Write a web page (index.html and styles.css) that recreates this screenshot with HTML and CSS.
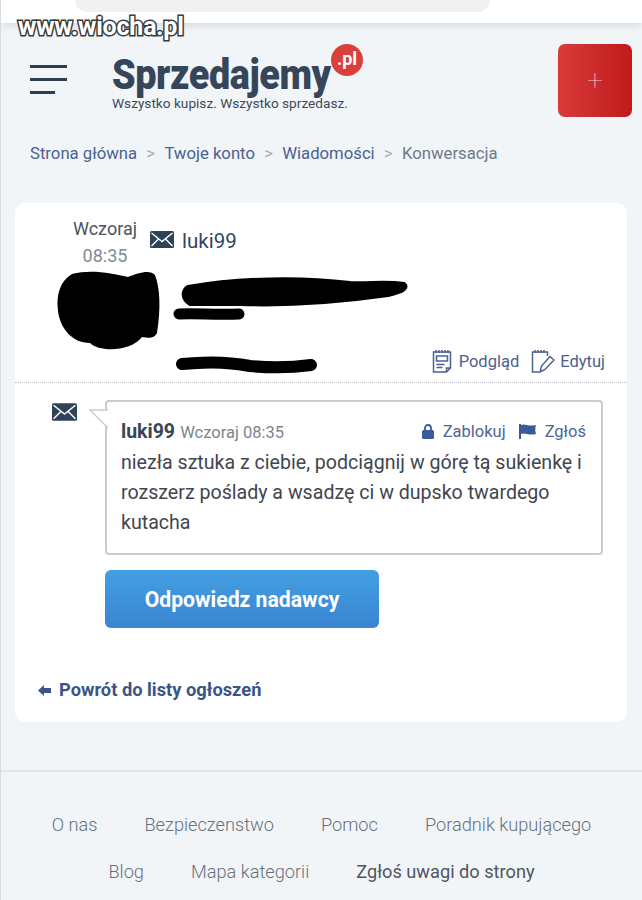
FILE: index.html
```html
<!DOCTYPE html>
<html lang="pl">

<head>
    <meta charset="UTF-8">
    <meta name="viewport" content="width=device-width, initial-scale=1.0">
    <title>Konwersacja</title>
    <link rel="stylesheet" href="styles.css">
</head>

<body>
    <div class="browser-bar">
        <div class="browser-pill"></div>
    </div>
    <div class="watermark">www.wiocha.pl</div>

    <header class="site-header">
        <div class="burger">
            <span></span>
            <span></span>
            <span class="short"></span>
        </div>
        <div class="logo">
            <div class="logo-name">Sprzedajemy</div>
            <div class="logo-badge">.pl</div>
            <div class="logo-tagline">Wszystko kupisz. Wszystko sprzedasz.</div>
        </div>
        <button class="add-btn">+</button>
    </header>

    <nav class="breadcrumb">
        <a>Strona główna</a>
        <span class="sep">&gt;</span>
        <a>Twoje konto</a>
        <span class="sep">&gt;</span>
        <a>Wiadomości</a>
        <span class="sep">&gt;</span>
        <span class="current">Konwersacja</span>
    </nav>

    <main class="card">
        <section class="offer">
            <div class="offer-top">
                <div class="offer-date">
                    <div class="day">Wczoraj</div>
                    <div class="hour">08:35</div>
                </div>
                <svg class="mail-icon" viewBox="0 0 24 17">
                    <rect width="24" height="17" rx="1.500" fill="#2f4358" />
                    <path d="M1.500 2 12 10.500 22.500 2M1.500 15 8.500 8M22.500 15 15.500 8" fill="none" stroke="#fff" stroke-width="1.400" />
                </svg>
                <span class="offer-user">luki99</span>
            </div>
            <div class="offer-actions">
                <a class="action">
                    <svg class="action-icon" viewBox="0 0 20 24">
                        <path d="M1.500 3h17v16l-4 4h-13zM14.500 23v-4h4M4 1v3M7 1v3M10 1v3M13 1v3M16 1v3M4.500 15.500h8M4.500 18.500h6" fill="none" stroke="#4a6290" stroke-width="1.500" />
                        <rect x="4.500" y="7" width="11" height="5" fill="none" stroke="#4a6290" stroke-width="1.500" />
                    </svg>
                    Podgląd
                </a>
                <a class="action">
                    <svg class="action-icon wide" viewBox="0 0 24 24">
                        <path d="M8 23H1.500V3h15v4M4 1v3M7 1v3M10 1v3M13 1v3M9 23l1.500-6L19 7.500l4 3.500-9 9.500z" fill="none" stroke="#4a6290" stroke-width="1.500" />
                    </svg>
                    Edytuj
                </a>
            </div>
            <!-- scribbles over the censored photo and title, page x with card-relative y -->
            <svg class="scribbles" viewBox="0 0 642 180">
                <path d="M72 71 C90 66 112 70 128 74 C138 70 150 66 155 72 C160 85 161 105 157 130 C154 136 148 135 142 134 C132 148 100 150 90 140 C72 140 60 125 58 108 C56 92 60 78 72 71Z" fill="#000" />
                <path d="M188 84 C240 75 300 74 350 80 C370 81 385 78 404 81 C408 85 404 88 388 92 C360 96 300 103 240 101 L190 101 C182 96 182 88 188 84Z" fill="#000" stroke="#000" stroke-width="4" stroke-linejoin="round" />
                <path d="M179 111 C195 110 215 112 239 111" fill="none" stroke="#000" stroke-width="11" stroke-linecap="round" />
                <path d="M182 161 C210 158 235 160 250 163 C270 165 290 165 311 162" fill="none" stroke="#000" stroke-width="12" stroke-linecap="round" />
            </svg>
        </section>

        <section class="thread">
            <div class="message-row">
                <svg class="mail-icon small" viewBox="0 0 24 17">
                    <rect width="24" height="17" rx="1.500" fill="#2f4358" />
                    <path d="M1.500 2 12 10.500 22.500 2M1.500 15 8.500 8M22.500 15 15.500 8" fill="none" stroke="#fff" stroke-width="1.400" />
                </svg>
                <div class="bubble">
                    <svg class="bubble-tail" viewBox="0 0 19 20">
                        <path d="M19 1H1L19 19" fill="#fff" stroke="#c8cdd0" stroke-width="1.500" />
                    </svg>
                    <div class="bubble-head">
                        <div class="author"><b>luki99</b> <span>Wczoraj 08:35</span></div>
                        <div class="bubble-actions">
                            <a class="action">
                                <svg class="mini-icon" viewBox="0 0 12 15">
                                    <path d="M3 6V4a3 3 0 0 1 6 0v2" fill="none" stroke="#3b5a9a" stroke-width="1.800" />
                                    <rect y="6" width="12" height="9" rx="1.500" fill="#3b5a9a" />
                                </svg>
                                Zablokuj
                            </a>
                            <a class="action">
                                <svg class="mini-icon flag" viewBox="0 0 18 15">
                                    <path d="M1 0v15" stroke="#3b5a9a" stroke-width="2" />
                                    <path d="M2 1c4-2 7 2 15 0-1 3-1 6 0 9-8 2-11-2-15 0z" fill="#3b5a9a" />
                                </svg>
                                Zgłoś
                            </a>
                        </div>
                    </div>
                    <p class="message-text">niezła sztuka z ciebie, podciągnij w górę tą sukienkę i rozszerz poślady a wsadzę ci w dupsko twardego kutacha</p>
                </div>
            </div>
            <button class="reply-btn">Odpowiedz nadawcy</button>
            <a class="back-link">
                <svg class="back-icon" viewBox="0 0 13 11">
                    <path d="M0 5.500 6 0v3h7v5H6v3z" fill="#3b5487" />
                </svg>
                Powrót do listy ogłoszeń
            </a>
        </section>
    </main>

    <footer class="site-footer">
        <div class="footer-links">
            <a>O nas</a>
            <a>Bezpieczenstwo</a>
            <a>Pomoc</a>
            <a>Poradnik kupującego</a>
        </div>
        <div class="footer-links">
            <a>Blog</a>
            <a>Mapa kategorii</a>
            <a class="strong">Zgłoś uwagi do strony</a>
        </div>
    </footer>
</body>

</html>
```

FILE: styles.css
```css
body {
    margin: 0;
    height: 900px;
    overflow: hidden;
    font-family: Roboto, "Liberation Sans", sans-serif;
    background-color: #f2f5f7;
    border-left: 1px solid #d9dde0;
    box-sizing: border-box;
    position: relative;
}

.browser-bar {
    height: 23px;
    background-color: #fff;
    box-shadow: 0 2px 8px rgba(0, 0, 0, 0.12);
    padding-left: 74px;
}

.browser-pill {
    width: 415px;
    height: 12px;
    background-color: #f0f1f2;
    border-radius: 0 0 14px 14px;
}

.watermark {
    position: absolute;
    top: 12px;
    left: 17px;
    font-size: 25px;
    font-weight: 700;
    color: #fff;
    letter-spacing: -0.2px;
    -webkit-text-stroke: 3px #3a3a3a;
    paint-order: stroke;
}

/* Header */
.site-header {
    display: flex;
    align-items: flex-start;
    padding: 21px 10px 0 29px;
    height: 120px;
    box-sizing: border-box;
}

.burger {
    width: 37px;
    margin-top: 21px;
    display: flex;
    flex-direction: column;
    gap: 10px;
}

.burger span {
    display: block;
    height: 3px;
    background-color: #2f3d4f;
}

.burger .short {
    width: 25px;
}

.logo {
    position: relative;
    margin-left: 45px;
    margin-top: 9px;
    flex: 1;
}

.logo-name {
    font-size: 43px;
    line-height: 42px;
    font-weight: 900;
    color: #36465a;
    letter-spacing: -0.5px;
    transform: scaleX(0.88);
    transform-origin: left center;
}

.logo-badge {
    position: absolute;
    left: 219px;
    top: -9px;
    width: 32px;
    height: 32px;
    border-radius: 50%;
    background-color: #d9403a;
    color: #fff;
    font-size: 18px;
    font-weight: 700;
    line-height: 30px;
    text-align: center;
}

.logo-tagline {
    font-size: 13.65px;
    color: #3d4a5a;
    line-height: 16px;
}

.add-btn {
    width: 74px;
    height: 73px;
    border: none;
    border-radius: 7px;
    background: linear-gradient(90deg, #d93a3a, #bf1b1b);
    color: #f6c9c9;
    font-size: 28px;
    font-weight: 100;
    font-family: Roboto, sans-serif;
}

/* Breadcrumb */
.breadcrumb {
    display: flex;
    gap: 9.3px;
    padding-left: 29px;
    font-size: 16.7px;
    line-height: 22px;
    height: 60px;
    color: #4a6290;
}

.breadcrumb .sep {
    color: #a5adb5;
}

.breadcrumb .current {
    color: #6d7a8c;
}

/* Card */
.card {
    margin: 0 15px 0 14px;
    height: 519px;
    background-color: #fff;
    border-radius: 10px;
}

.offer {
    position: relative;
    height: 180px;
    border-bottom: 1px dotted #b9bec2;
    box-sizing: border-box;
}

.offer-top {
    display: flex;
    align-items: flex-start;
    padding: 12px 0 0 58px;
}

.offer-date {
    width: 64px;
    text-align: center;
    font-size: 18px;
    line-height: 27px;
    color: #4a5460;
}

.hour {
    color: #7f8b96;
}

.mail-icon {
    width: 24px;
    height: 17px;
    margin: 16px 0 0 13px;
}

.offer-user {
    font-size: 20.5px;
    line-height: 26px;
    margin: 13px 0 0 8px;
    color: #33475c;
}

.offer-actions {
    position: absolute;
    right: 22px;
    bottom: 9px;
    display: flex;
    gap: 12px;
}

.action {
    display: flex;
    align-items: center;
    gap: 7px;
    color: #4a6290;
    font-size: 16.5px;
}

.action-icon {
    width: 20px;
    height: 24px;
}

.action-icon.wide {
    width: 24px;
    margin-right: -2px;
}

.scribbles {
    position: absolute;
    left: -15px;
    top: 0;
    width: 642px;
    height: 180px;
    pointer-events: none;
}

/* Thread */
.thread {
    padding: 17px 24px 0 23px;
}

.message-row {
    display: flex;
    align-items: flex-start;
}

.mail-icon.small {
    width: 25px;
    height: 18px;
    margin: 3px 0 0 14px;
    flex-shrink: 0;
}

.bubble {
    position: relative;
    margin-left: 28px;
    flex: 1;
    height: 155px;
    box-sizing: border-box;
    border: 2px solid #c8cdd0;
    border-radius: 4px;
    padding: 17px 15px 0 14px;
}

.bubble-tail {
    position: absolute;
    left: -18px;
    top: 7px;
    width: 19px;
    height: 20px;
}

.bubble-head {
    display: flex;
    justify-content: space-between;
    align-items: center;
    height: 24px;
}

.author {
    font-size: 16.5px;
    color: #7a8590;
}

.author b {
    font-size: 19.5px;
    color: #3a4654;
}

.author span {
    margin-left: 1px;
}

.bubble-actions {
    display: flex;
    gap: 13px;
}

.bubble-actions .action {
    color: #4f6696;
}

.mini-icon {
    width: 12px;
    height: 15px;
    margin-right: 2px;
}

.mini-icon.flag {
    width: 18px;
    margin-right: 1px;
}

.message-text {
    margin: 5px 0 0;
    font-size: 19.6px;
    line-height: 30px;
    color: #3f4650;
}

.reply-btn {
    display: block;
    width: 274px;
    height: 58px;
    margin: 15px 0 0 67px;
    border: none;
    border-radius: 6px;
    background: linear-gradient(180deg, #439fe2, #3a84d1);
    color: #fff;
    font-family: Roboto, sans-serif;
    font-size: 21.2px;
    font-weight: 700;
}

.back-link {
    display: flex;
    align-items: center;
    gap: 8px;
    margin-top: 51px;
    color: #3b5487;
    font-size: 18.3px;
    font-weight: 700;
    line-height: 22px;
}

.back-icon {
    width: 13px;
    height: 11px;
}

/* Footer */
.site-footer {
    margin-top: 48px;
    border-top: 2px solid #dfe6eb;
    padding-top: 33px;
}

.footer-links {
    display: flex;
    justify-content: center;
    gap: 47px;
    height: 47px;
    font-size: 18.2px;
    line-height: 40px;
    font-weight: 300;
    color: #66717d;
}

.footer-links .strong {
    font-weight: 400;
    color: #4d5562;
}
```
